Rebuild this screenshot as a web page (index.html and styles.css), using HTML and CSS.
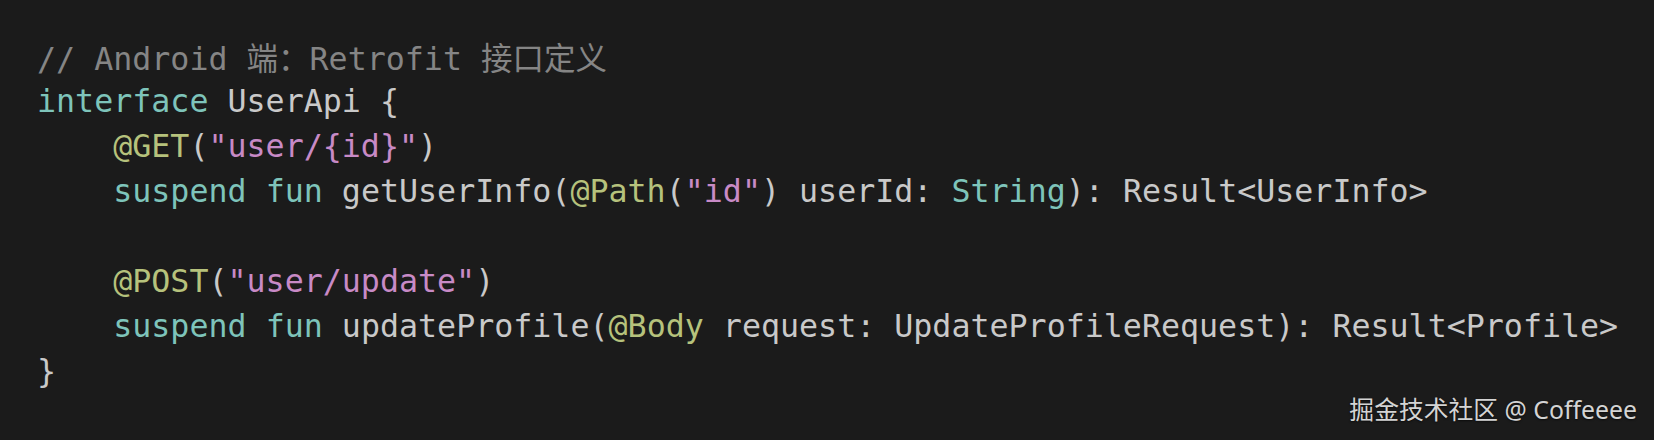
FILE: index.html
```html
<!DOCTYPE html>
<html lang="zh">
<head>
<meta charset="utf-8">
<title>UserApi</title>
<link rel="stylesheet" href="styles.css">
</head>
<body>
<main class="page">
<pre class="code"><code><div class="line"><span class="cm">// Android <span class="cjk">端：</span>Retrofit <span class="cjk">接口定义</span></span></div><div class="line"><span class="kw">interface</span> UserApi {</div><div class="line">    <span class="an">@GET</span>(<span class="str">"user/{id}"</span>)</div><div class="line">    <span class="kw">suspend</span> <span class="kw">fun</span> getUserInfo(<span class="an">@Path</span>(<span class="str">"id"</span>) userId: <span class="ty">String</span>): Result&lt;UserInfo&gt;</div><div class="line"> </div><div class="line">    <span class="an">@POST</span>(<span class="str">"user/update"</span>)</div><div class="line">    <span class="kw">suspend</span> <span class="kw">fun</span> updateProfile(<span class="an">@Body</span> request: UpdateProfileRequest): Result&lt;Profile&gt;</div><div class="line">}</div></code></pre>
<footer class="watermark">掘金技术社区 @ Coffeeee</footer>
</main>
</body>
</html>
```

FILE: styles.css
```css
html, body {
  margin: 0;
  padding: 0;
  background: #1b1b1b;
}

.page {
  width: 1654px;
  height: 440px;
  display: flex;
  flex-direction: column;
  box-sizing: border-box;
  overflow: hidden;
}

.code {
  margin: 0;
  padding: 34px 0 0 37px;
  font-family: "DejaVu Sans Mono", "Noto Sans CJK SC", monospace;
  font-size: 31.65px;
  line-height: 45px;
  color: #c9c9c9;
  white-space: pre;
}

.code code {
  font: inherit;
}

.line {
  height: 45px;
}

.cjk {
  font-family: "Noto Sans CJK SC", sans-serif;
  font-size: 31.5px;
}

.cm { color: #858585; }
.kw { color: #7ec4ba; }
.ty { color: #7ec4ba; }
.an { color: #b6c27c; }
.str { color: #c88ac6; }

.watermark {
  margin-top: auto;
  align-self: flex-end;
  padding: 0 17px 16px 0;
  font-family: "Noto Sans", "Noto Sans CJK SC", sans-serif;
  font-size: 24.8px;
  line-height: 30px;
  color: #d4d4d4;
  text-shadow: 0 1px 2px rgba(0, 0, 0, 0.6);
}
```
